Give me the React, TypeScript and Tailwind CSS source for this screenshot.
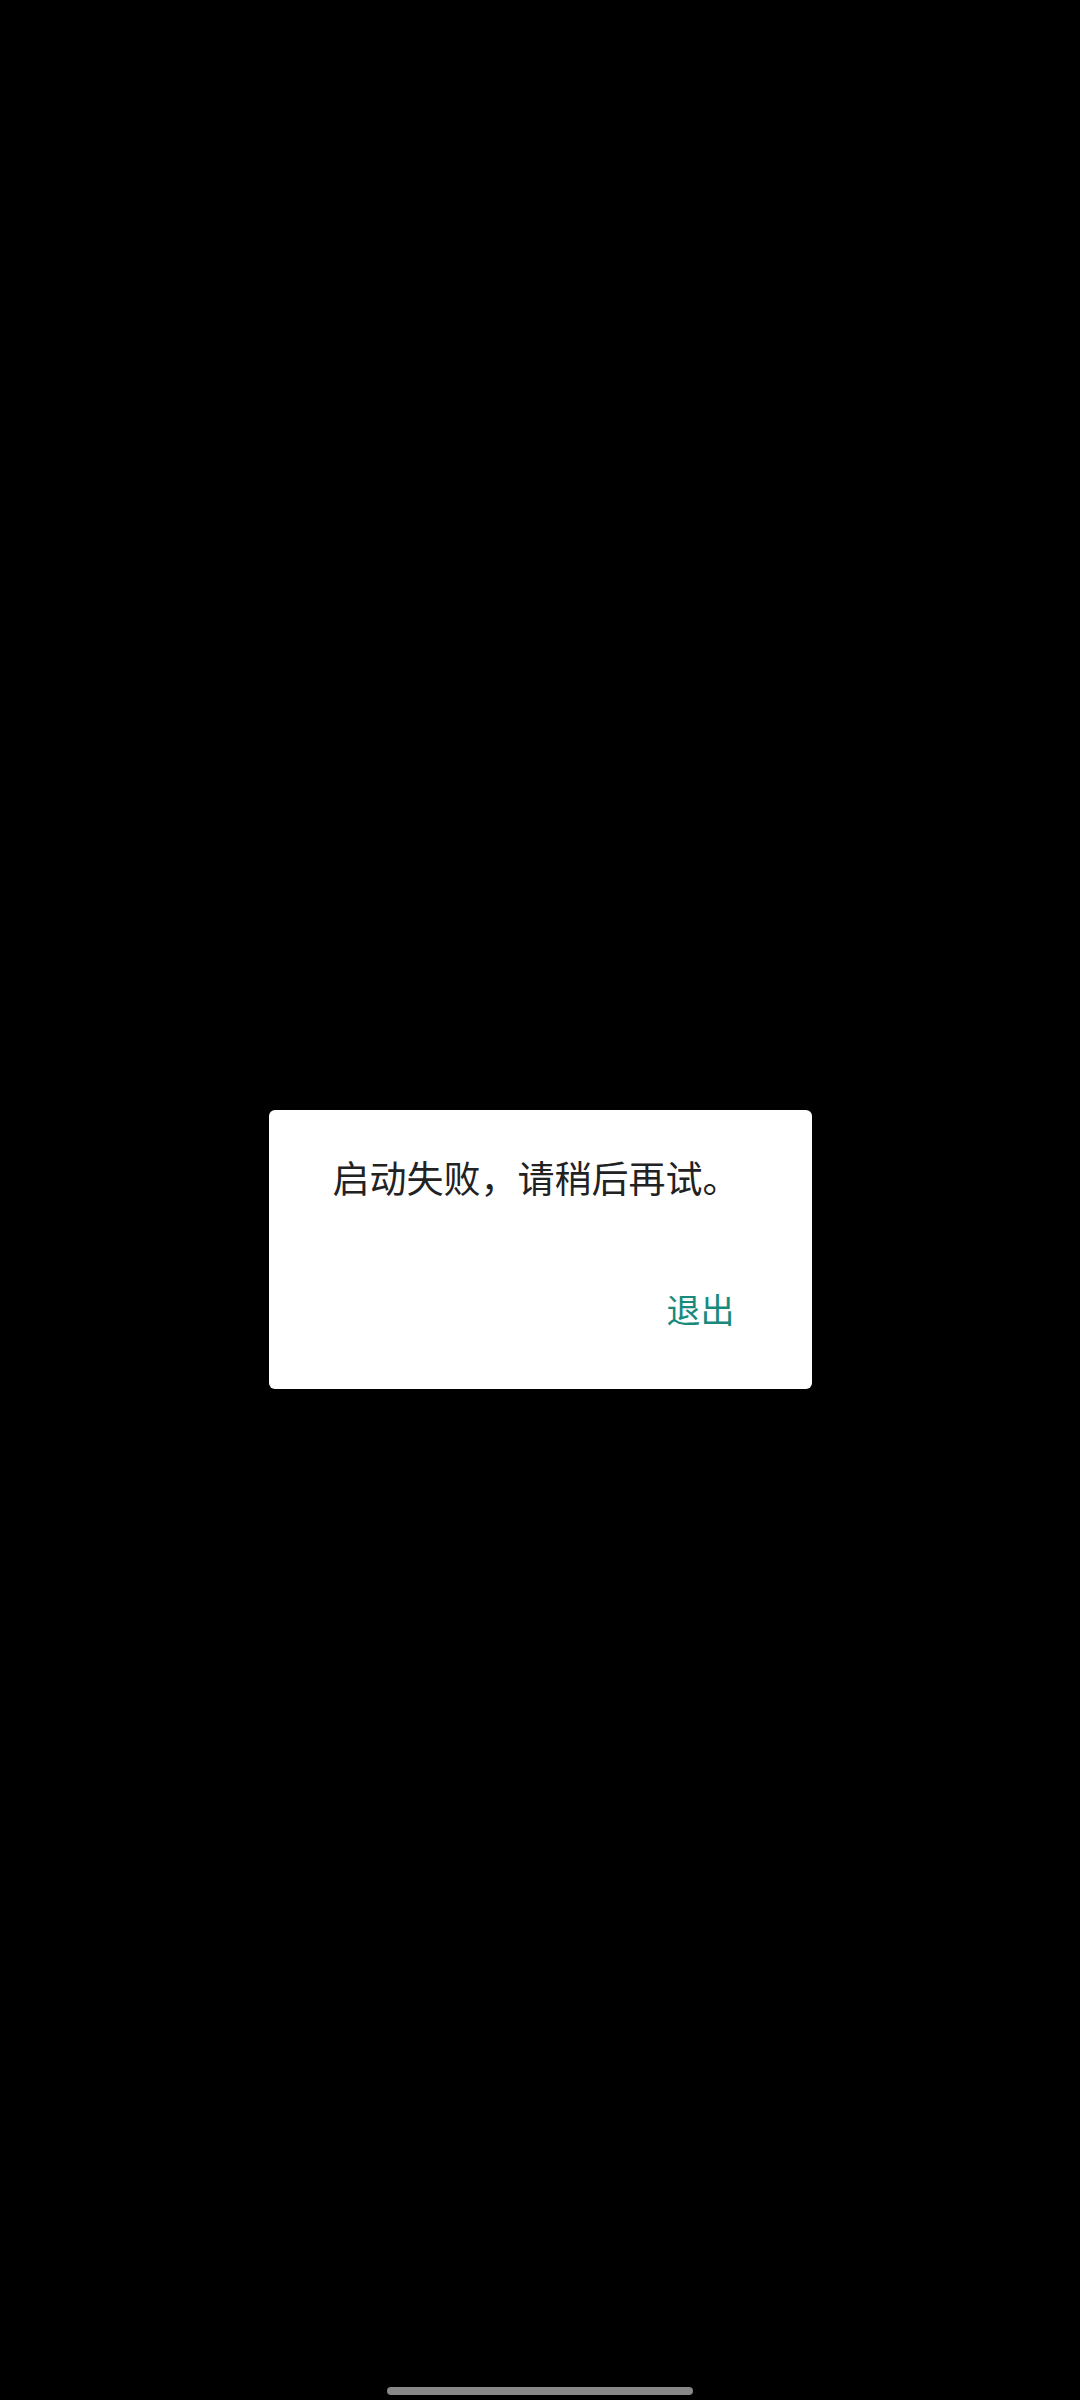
export default function App() {
  return (
    <div
      className="relative flex h-[2400px] w-full flex-col bg-black"
      style={{ fontFamily: '"Noto Sans CJK SC", "Noto Sans", sans-serif' }}
    >
      <div className="h-[1110px] shrink-0" />

      {/* error dialog */}
      <div className="mx-auto flex h-[279px] w-[543px] flex-col rounded-[6px] bg-white">
        <p className="pl-[64px] pt-[43px] text-[37px] leading-[48px] text-[#222222]">
          启动失败，请稍后再试。
        </p>
        <div className="flex justify-end pr-[61px] pt-[86px]">
          <button className="px-4 text-[34px] leading-[44px] text-[#178a7c]">退出</button>
        </div>
      </div>

      {/* gesture bar */}
      <div className="mt-auto flex justify-center pb-[5px]">
        <div className="h-[8px] w-[306px] rounded-full bg-[#888888]" />
      </div>
    </div>
  )
}
